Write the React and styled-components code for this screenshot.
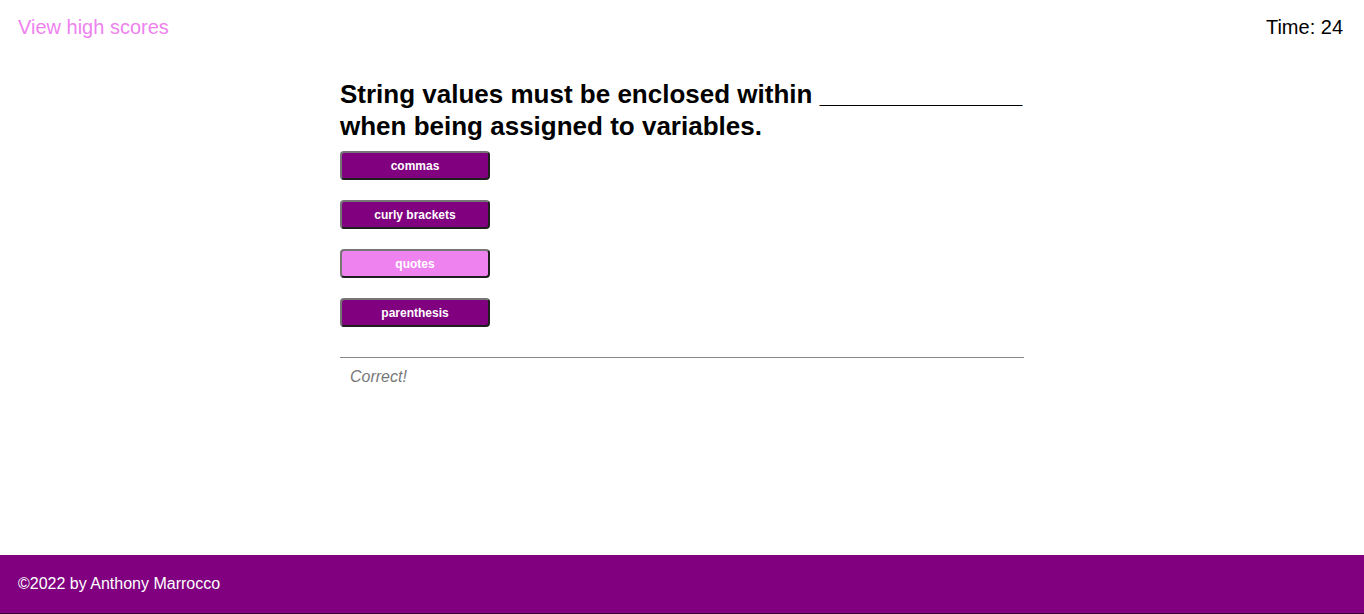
import React from "react";
import styled, { createGlobalStyle } from "styled-components";

const GlobalStyle = createGlobalStyle`
  html, body {
    margin: 0;
    padding: 0;
  }
  body {
    font-family: "Liberation Sans", Arial, sans-serif;
    background: #fff;
  }
`;

const choices = ["commas", "curly brackets", "quotes", "parenthesis"];

export default function App() {
  return (
    <>
      <GlobalStyle />
      <Page>
        <Header>
          <ScoresLink href="#">View high scores</ScoresLink>
          <Timer>Time: 24</Timer>
        </Header>
        <Main>
          <Question>
            String values must be enclosed within ______________ when being
            assigned to variables.
          </Question>
          <Choices>
            {choices.map((choice) => (
              <ChoiceButton key={choice} $selected={choice === "quotes"}>
                {choice}
              </ChoiceButton>
            ))}
          </Choices>
          <Feedback>Correct!</Feedback>
        </Main>
        <Footer>©2022 by Anthony Marrocco</Footer>
      </Page>
    </>
  );
}

const Page = styled.div`
  display: flex;
  flex-direction: column;
  min-height: 100vh;
`;

const Header = styled.header`
  display: flex;
  justify-content: space-between;
  align-items: center;
  padding: 16px 21px 0 18px;
  font-size: 20px;
  line-height: 23px;
`;

const ScoresLink = styled.a`
  color: violet;
  text-decoration: none;
`;

const Timer = styled.div`
  color: #000;
`;

const Main = styled.main`
  width: 684px;
  margin: 0 auto;
  padding-top: 39px;
`;

const Question = styled.h2`
  margin: 0;
  font-size: 26px;
  line-height: 32px;
  font-weight: bold;
  color: #000;
`;

const Choices = styled.div`
  display: flex;
  flex-direction: column;
  align-items: flex-start;
  gap: 20px;
  margin-top: 9px;
`;

const ChoiceButton = styled.button`
  width: 150px;
  height: 29px;
  padding: 0;
  border: 2px solid;
  border-color: #767676 #1e1e1e #1e1e1e #767676;
  border-radius: 4px;
  background: ${(p) => (p.$selected ? "violet" : "purple")};
  color: #fff;
  font-family: "Liberation Sans", Arial, sans-serif;
  font-size: 12px;
  font-weight: bold;
  cursor: pointer;
`;

const Feedback = styled.p`
  margin: 30px 0 0;
  padding: 10px 10px 0;
  border-top: 1px solid #888;
  color: #777;
  font-size: 16px;
  font-style: italic;
`;

const Footer = styled.footer`
  margin-top: auto;
  height: 58px;
  display: flex;
  align-items: center;
  padding: 0 18px;
  background: purple;
  border-bottom: 1px solid #3a003a;
  color: #fff;
  font-size: 16px;
`;
